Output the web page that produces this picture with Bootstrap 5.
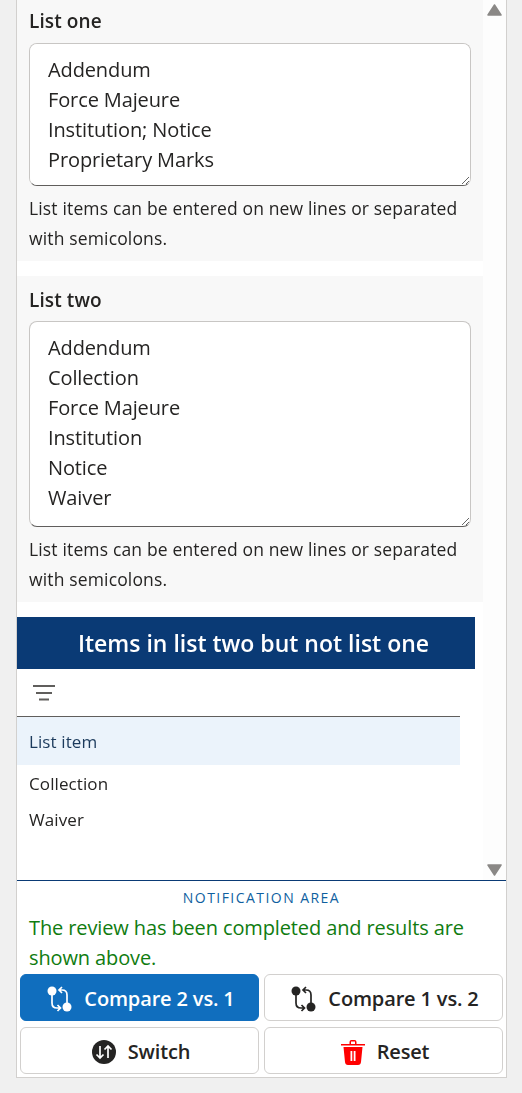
<!DOCTYPE html>
<html lang="en"><head><meta charset="utf-8"><title>Compare lists</title>
<link href="https://cdn.jsdelivr.net/npm/bootstrap@5.3.0/dist/css/bootstrap.min.css" rel="stylesheet">
<style>
html,body{height:1093px;overflow:hidden}
body{background:#f0f0f0;font-family:"Open Sans","Noto Sans",sans-serif;color:#252423}
.pane-frame{width:491px;height:1078px;margin-left:16px;border:solid #d2d0ce;border-width:0 1px 1px;background:#fff}
.scroll-zone{height:881px;border-bottom:1px solid #0a3a75}
.scroll-main{width:466px}
.scroll-rail{width:23px;background:#fdfdfd;padding-top:4px;padding-bottom:4px}
.field-box{background:#f8f8f8;padding:0 12px;height:261px}
.field-box.second{height:326px;margin-top:15px;padding-top:12px}
.field-label{font-size:19px;font-weight:600;line-height:24px;margin:0 0 10px;padding-top:9px;letter-spacing:.1px}
.field-box.second .field-label{padding-top:0;margin-bottom:9px}
.list-input{height:143px;border:1px solid #c8c6c4;border-bottom-color:#605e5c;border-radius:8px;padding:11px 18px;font-size:20px;line-height:30px;color:#252423;letter-spacing:-.12px;display:block;width:100%;background:#fff;outline:0}
.list-input.tall{height:206px}
.field-hint{font-size:17.5px;line-height:30px;margin:7px 0 0;letter-spacing:.15px}
.result-title{width:458px;height:52px;margin-top:15px;background:#0a3a75;color:#fff;font-size:23px;font-weight:600;line-height:52px;text-align:center;padding-left:15px}
.filter-row{width:443px;height:48px;border-bottom:1px solid #605e5c;padding-left:16px}
.col-head{width:443px;height:48px;background:#ebf3fb;padding-left:12px;font-size:17px;line-height:50px;color:#1b3a5c;letter-spacing:.1px}
.item-row{padding-left:12px;font-size:17px;line-height:36px;letter-spacing:.1px}
.first-item{margin-top:1px}
.notice-title{font-size:14px;letter-spacing:1.45px;color:#0f5f9f;text-align:center;line-height:18px;margin-top:8px}
.notice-text{color:#107c10;font-size:20px;line-height:30px;padding:0 12px;margin:0;height:45px;letter-spacing:-.12px;margin-top:6px}
.action-grid{display:grid;grid-template-columns:239px 239px;column-gap:5px;row-gap:6px;padding:16px 3px 0}
.action-btn{height:47px;border:1px solid #d2d0ce;border-radius:6px;background:#fff;color:#252423;font-size:20px;font-weight:600;padding:3px 0 0 3px;letter-spacing:-.15px}
.action-btn.is-active,.action-btn.is-active:hover{background:#106ebe;border-color:#106ebe;color:#fff}
</style></head>
<body>
<div class="pane-frame">
  <div class="scroll-zone d-flex">
    <div class="scroll-main">
      <div class="field-box">
        <p class="field-label">List one</p>
        <textarea class="list-input" spellcheck="false">Addendum
Force Majeure
Institution; Notice
Proprietary Marks</textarea>
        <p class="field-hint">List items can be entered on new lines or separated with semicolons.</p>
      </div>
      <div class="field-box second">
        <p class="field-label">List two</p>
        <textarea class="list-input tall" spellcheck="false">Addendum
Collection
Force Majeure
Institution
Notice
Waiver</textarea>
        <p class="field-hint">List items can be entered on new lines or separated with semicolons.</p>
      </div>
      <div class="result-title">Items in list two but not list one</div>
      <div class="filter-row d-flex align-items-center">
        <svg width="22" height="18" viewBox="0 0 22 18" fill="none" stroke="#605e5c" stroke-width="2"><path d="M0 2h22M3 9h16M6 15.500h10"/></svg>
      </div>
      <div class="col-head">List item</div>
      <div class="item-row first-item">Collection</div>
      <div class="item-row">Waiver</div>
    </div>
    <div class="scroll-rail d-flex flex-column justify-content-between align-items-center">
      <svg width="15" height="12" viewBox="0 0 15 12"><path d="M7.5 1 14 11H1z" fill="#8a8886" stroke="#8a8886" stroke-width="1.500" stroke-linejoin="round"/></svg>
      <svg width="15" height="12" viewBox="0 0 15 12"><path d="M7.5 11 14 1H1z" fill="#8a8886" stroke="#8a8886" stroke-width="1.500" stroke-linejoin="round"/></svg>
    </div>
  </div>
  <div class="notice-title">NOTIFICATION AREA</div>
  <p class="notice-text">The review has been completed and results are shown above.</p>
  <div class="action-grid">
    <button class="btn action-btn is-active d-flex align-items-center justify-content-center gap-2" type="button">
      <svg width="25" height="26" viewBox="0 0 25 26" fill="none" stroke="#fff" stroke-width="1.7"><circle cx="5" cy="5" r="4.5" fill="#fff" stroke="none"/><circle cx="20" cy="21" r="4.5" fill="#fff" stroke="none"/><path d="M5 8v9q0 5 5 5h3M10.500 19 13.500 22 10.500 25M20 17V9q0-5-5-5h-3M15 1 12 4l3 3"/></svg>
      <span class="ms-1">Compare 2 vs. 1</span></button>
    <button class="btn action-btn d-flex align-items-center justify-content-center gap-2" type="button">
      <svg width="25" height="26" viewBox="0 0 25 26" fill="none" stroke="#252423" stroke-width="1.7"><circle cx="5" cy="5" r="4.500" fill="#252423" stroke="none"/><circle cx="20" cy="21" r="4.500" fill="#252423" stroke="none"/><path d="M5 8v9q0 5 5 5h3M10.500 19 13.500 22 10.500 25M20 17V9q0-5-5-5h-3M15 1 12 4l3 3"/></svg>
      <span class="ms-1">Compare 1 vs. 2</span></button>
    <button class="btn action-btn d-flex align-items-center justify-content-center gap-2" type="button">
      <svg width="24" height="24" viewBox="0 0 24 24"><circle cx="12" cy="12" r="12" fill="#252423"/><path d="M8 6v12M4.500 14.500 8 18l3.500-3.500M16 18V6M12.500 9.500 16 6l3.500 3.500" fill="none" stroke="#fff" stroke-width="1.700"/></svg>
      <span class="ms-1">Switch</span></button>
    <button class="btn action-btn d-flex align-items-center justify-content-center gap-2" type="button">
      <svg width="24" height="25" viewBox="0 0 24 25"><path d="M0 4h8.500V2q0-2 2-2h3q2 0 2 2v2H24v1.500H0zM10 4h4V1.500h-4zM2.500 7h19l-1.500 15q-.3 3-3 3H7q-2.700 0-3-3zM9.500 11v10h1.800V11zM12.700 11v10h1.800V11z" fill="#f00" fill-rule="evenodd"/></svg>
      <span class="ms-1">Reset</span></button>
  </div>
</div>
<script src="https://cdn.jsdelivr.net/npm/bootstrap@5.3.0/dist/js/bootstrap.bundle.min.js"></script>
</body></html>
